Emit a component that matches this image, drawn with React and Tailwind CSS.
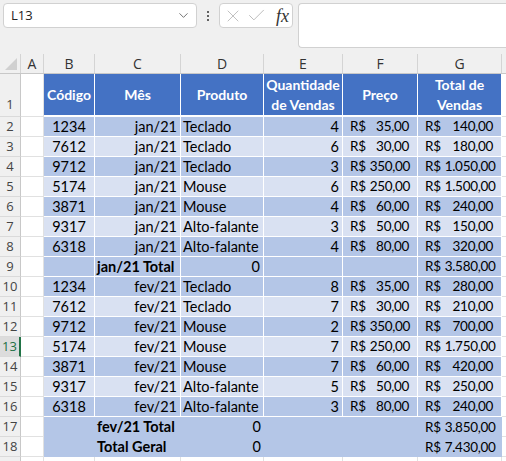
import { ChevronDown, X, Check } from "lucide-react";

const groups = [
  {
    month: "jan/21",
    total: "3.580,00",
    label: "jan/21 Total",
    rows: [
      ["1234", "Teclado", "4", "35,00", "140,00"],
      ["7612", "Teclado", "6", "30,00", "180,00"],
      ["9712", "Teclado", "3", "350,00", "1.050,00"],
      ["5174", "Mouse", "6", "250,00", "1.500,00"],
      ["3871", "Mouse", "4", "60,00", "240,00"],
      ["9317", "Alto-falante", "3", "50,00", "150,00"],
      ["6318", "Alto-falante", "4", "80,00", "320,00"],
    ],
  },
  {
    month: "fev/21",
    total: "3.850,00",
    label: "fev/21 Total",
    rows: [
      ["1234", "Teclado", "8", "35,00", "280,00"],
      ["7612", "Teclado", "7", "30,00", "210,00"],
      ["9712", "Mouse", "2", "350,00", "700,00"],
      ["5174", "Mouse", "7", "250,00", "1.750,00"],
      ["3871", "Mouse", "7", "60,00", "420,00"],
      ["9317", "Alto-falante", "5", "50,00", "250,00"],
      ["6318", "Alto-falante", "3", "80,00", "240,00"],
    ],
  },
];

const DARK = "bg-[#b4c6e7]";
const LIGHT = "bg-[#d9e1f2]";

// row header cell (numbers on the left)
const RowNum = ({ n, selected, tall }) => (
  <div
    className={
      "w-[21px] shrink-0 flex justify-center text-[13px] font-['Open_Sans',sans-serif] border-b border-[#dadada] " +
      (tall ? "items-end pb-[2px] " : "items-center ") +
      (selected
        ? "bg-[#dcdcdc] text-[#1e7145] border-r-2 border-r-[#217346]"
        : "bg-[#f0f0f0] text-[#444] border-r border-r-[#c8c8c8]")
    }
  >
    {n}
  </div>
);

const ColA = () => <div className="w-[23px] shrink-0 bg-white border-r border-b border-[#e1e1e1]" />;
const Rest = () => <div className="flex-1 bg-white border-b border-[#e1e1e1]" />;

// accounting format: currency at left, value at right
const Money = ({ value, pr = "pr-[7px]" }) => (
  <div className={"flex justify-between gap-[4px] w-full pl-[7px] text-[13.5px] tracking-[-0.3px] " + pr}>
    <span>R$</span>
    <span>{value}</span>
  </div>
);

const DataRow = ({ n, shade, row, month, selected }) => {
  const [code, prod, qty, price, total] = row;
  const cell = "h-full flex items-center border-r border-b border-white " + shade;
  return (
    <div className="flex h-[20px]">
      <RowNum n={n} selected={selected} />
      <ColA />
      <div className={cell + " w-[51px] justify-center"}>{code}</div>
      <div className={cell + " w-[86px] justify-end pr-[3px]"}>{month}</div>
      <div className={cell + " w-[83px] pl-[2px] whitespace-nowrap"}>{prod}</div>
      <div className={cell + " w-[79px] justify-end pr-[3px]"}>{qty}</div>
      <div className={cell + " w-[75px]"}>
        <Money value={price} pr="pr-[8px]" />
      </div>
      <div className={cell + " w-[84px]"}>
        <Money value={total} pr="pr-[8px]" />
      </div>
      <Rest />
    </div>
  );
};

const TotalRow = ({ n, label, total, lined }) => {
  const cell =
    "h-full flex items-center " + DARK + (lined ? " border-r border-b border-white" : "");
  return (
    <div className="flex h-[20px]">
      <RowNum n={n} />
      <ColA />
      <div className={cell + " w-[51px]"} />
      <div className={cell + " w-[86px] pl-[2px] font-bold whitespace-nowrap"}>{label}</div>
      <div className={cell + " w-[83px] justify-end pr-[3px]"}>0</div>
      <div className={cell + " w-[79px]"} />
      <div className={cell + " w-[75px]"} />
      <div className={cell + " w-[84px]"}>
        <Money value={total} pr="pr-[8px]" />
      </div>
      <Rest />
    </div>
  );
};

const colHeads = [
  ["A", "w-[23px]"],
  ["B", "w-[51px]"],
  ["C", "w-[86px]"],
  ["D", "w-[83px]"],
  ["E", "w-[79px]"],
  ["F", "w-[75px]"],
  ["G", "w-[84px]"],
];

export default function App() {
  let n = 2;
  return (
    <div className="w-[506px] h-[461px] overflow-hidden bg-white text-black">
      {/* formula bar */}
      <div className="h-[54px] bg-[#f0f0f0] flex items-start pt-[2px] pl-[3px] font-['Open_Sans',sans-serif]">
        <div className="mt-[1px] w-[194px] h-[25px] bg-white border border-[#d1d1d1] rounded-[4px] flex items-center pl-[7px] pr-[5px]">
          <span className="text-[13px] text-[#222] flex-1">L13</span>
          <ChevronDown size={15} strokeWidth={1.3} className="text-[#555]" />
        </div>
        <div className="w-[22px] h-[28px] flex flex-col items-center justify-center gap-[2px]">
          <span className="w-[2px] h-[2px] bg-[#333] rounded-full" />
          <span className="w-[2px] h-[2px] bg-[#333] rounded-full" />
          <span className="w-[2px] h-[2px] bg-[#333] rounded-full" />
        </div>
        <div className="mt-[1px] w-[74px] h-[25px] bg-white border border-[#d1d1d1] rounded-[4px] flex items-center pl-[3px] gap-[3px]">
          <X size={20} strokeWidth={1} className="text-[#b4b4b4]" />
          <Check size={21} strokeWidth={1} className="text-[#b4b4b4]" />
          <span className="ml-[6px] text-[18px] italic font-['Liberation_Serif',serif] text-[#333] leading-none">
            fx
          </span>
        </div>
        <div className="ml-[5px] mt-[1px] flex-1 h-[45px] bg-white border border-[#d1d1d1] rounded-l-[4px] border-r-0" />
      </div>

      {/* column headers */}
      <div className="flex h-[20px] bg-[#f0f0f0] border-b border-[#c8c8c8] font-['Open_Sans',sans-serif] text-[14px] text-[#333]">
        <div className="w-[21px] shrink-0 flex items-end justify-end pr-[3px] pb-[3px] border-r border-[#d4d4d4]">
          <svg width="12" height="12" viewBox="0 0 12 12">
            <polygon points="12,0 12,12 0,12" fill="#d0d0d0" />
          </svg>
        </div>
        {colHeads.map(([l, w]) => (
          <div key={l} className={w + " shrink-0 flex items-center justify-center border-r border-[#d4d4d4]"}>
            {l}
          </div>
        ))}
        <div className="flex-1" />
      </div>

      <div className="font-['Lato','Liberation_Sans',sans-serif] text-[14.5px]">
        {/* header row */}
        <div className="flex h-[43px] text-[14px]">
          <RowNum n={1} tall />
          <ColA />
          {[
            ["Código", "w-[51px]"],
            ["Mês", "w-[86px]"],
            ["Produto", "w-[83px]"],
            ["Quantidade de Vendas", "w-[79px]"],
            ["Preço", "w-[75px]"],
            ["Total de Vendas", "w-[84px]"],
          ].map(([t, w]) => (
            <div
              key={t}
              className={
                w +
                " shrink-0 h-full bg-[#4472c4] text-white font-bold flex items-center justify-center text-center leading-[20px] border-r border-b-2 border-white px-[1px]"
              }
            >
              {t}
            </div>
          ))}
          <Rest />
        </div>

        {groups.map((g) => (
          <div key={g.month}>
            {g.rows.map((r, i) => {
              const num = n++;
              return (
                <DataRow
                  key={num}
                  n={num}
                  shade={i % 2 === 0 ? DARK : LIGHT}
                  row={r}
                  month={g.month}
                  selected={num === 13}
                />
              );
            })}
            <TotalRow n={n++} label={g.label} total={g.total} lined={g.month === "jan/21"} />
          </div>
        ))}
        <TotalRow n={18} label="Total Geral" total="7.430,00" />
        <div className="flex h-[20px]">
          <RowNum n="" />
          <ColA />
          <div className="w-[51px] border-r border-b border-[#e1e1e1]" />
          <div className="w-[86px] border-r border-b border-[#e1e1e1]" />
          <div className="w-[83px] border-r border-b border-[#e1e1e1]" />
          <div className="w-[79px] border-r border-b border-[#e1e1e1]" />
          <div className="w-[75px] border-r border-b border-[#e1e1e1]" />
          <div className="w-[84px] border-r border-b border-[#e1e1e1]" />
          <Rest />
        </div>
      </div>
    </div>
  );
}
